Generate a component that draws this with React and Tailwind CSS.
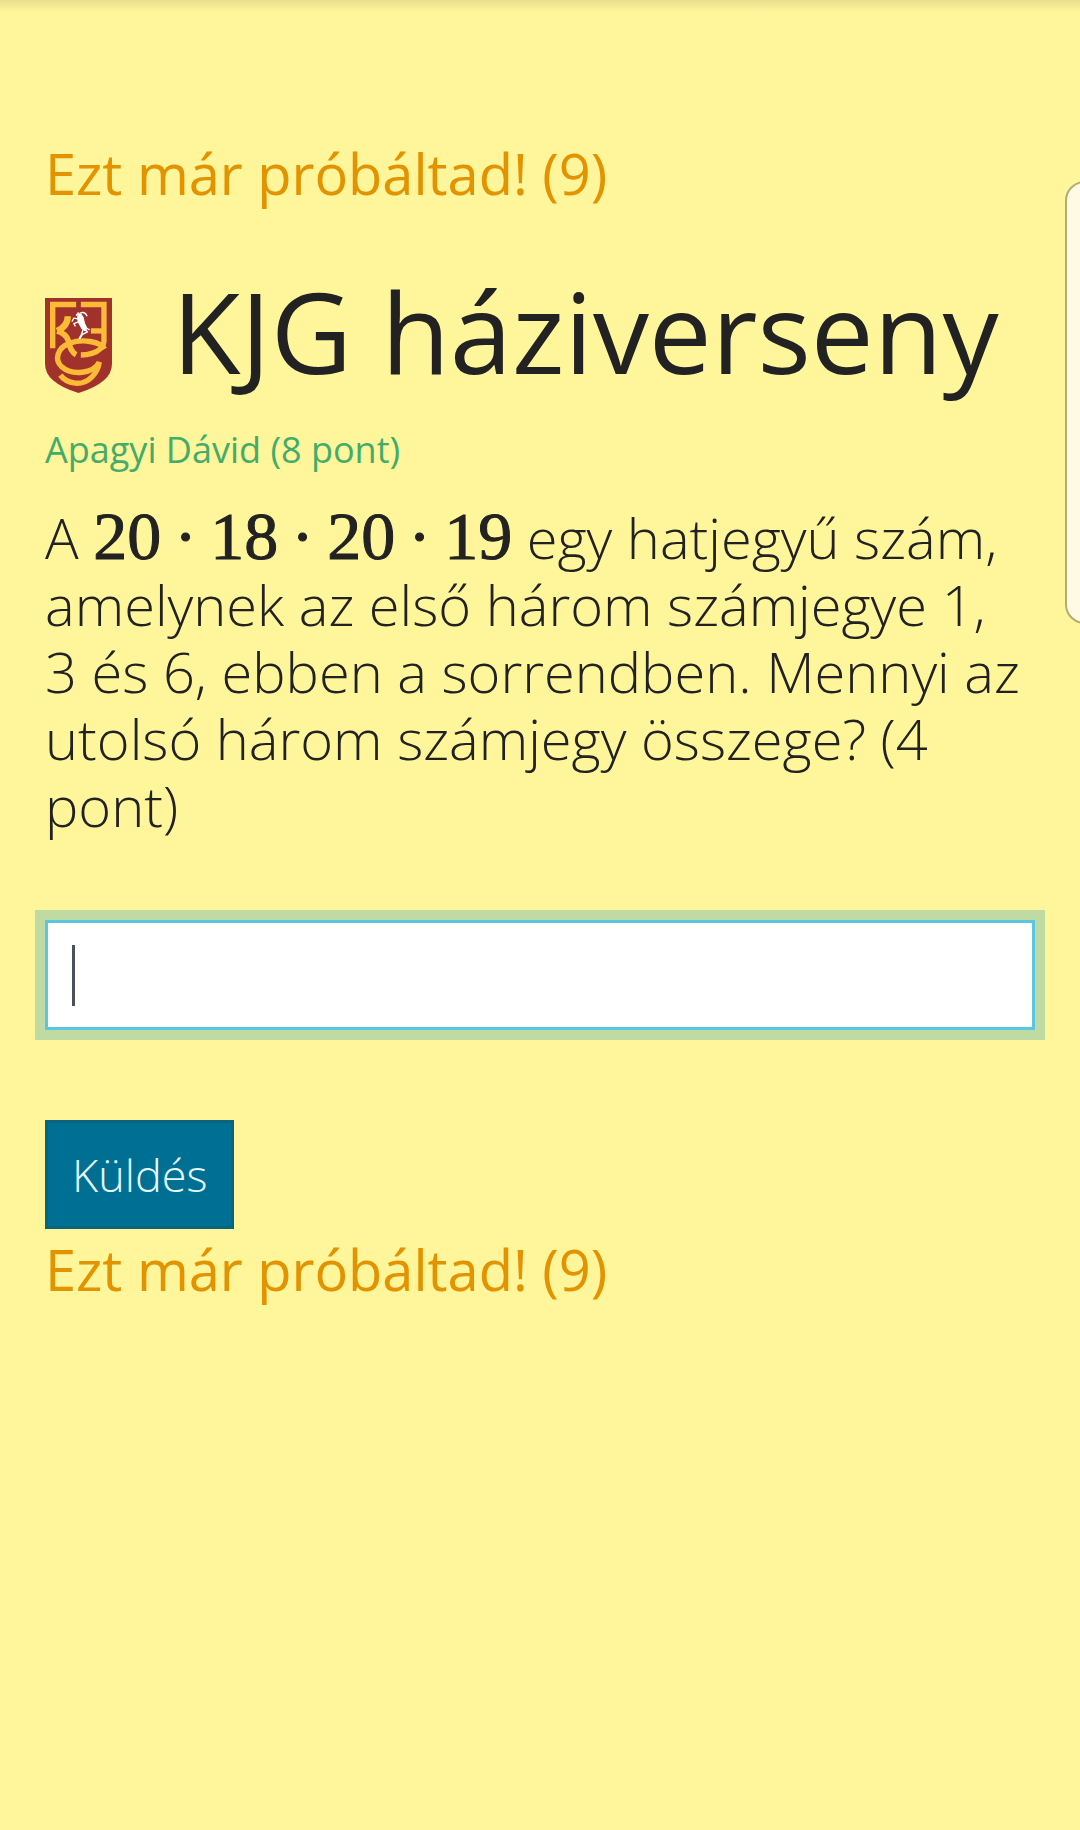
function Crest() {
  return (
    <svg viewBox="0 0 200 283" className="mb-1.5 h-[95px] w-[67px] shrink-0 self-end" role="img" aria-label="KJG">
      <path d="M0 0H200V195Q200 225 176 245Q150 268 100 283Q50 268 24 245Q0 225 0 195Z" fill="#a0322b" />
      <g fill="none" stroke="#fcbb36" strokeWidth="16">
        <path d="M93 19H23V150" />
        <path d="M107 19H176V130Q174 155 140 165Q125 170 107 170" />
        <path d="M137 98H176" />
        <path d="M68 54Q68 84 36 98" strokeWidth="19" />
        <path d="M36 98Q64 106 70 128Q76 160 93 169" strokeWidth="17" />
        <path d="M178 152C165 128 110 122 75 134C35 148 28 185 50 205C80 232 145 226 162 191C158 222 130 258 90 254Q60 250 46 230" />
      </g>
      <g stroke="#fff" strokeLinecap="round" strokeLinejoin="round">
        <path d="M99 46L108 49L114 58L118 76L125 90L120 98L110 91L100 73L97 60Z" fill="#fff" strokeWidth="3" />
        <path d="M105 45Q119 39 125 53M99 44L94 51M99 62L86 60L81 69M101 70L86 76L90 83M120 94L127 101L112 108L104 121M114 94L109 108L102 121M124 90L132 94" fill="none" strokeWidth="4" />
      </g>
    </svg>
  );
}

function Dot() {
  return <span className="inline-block w-[49px] text-center">·</span>;
}

function Notice() {
  return <p className="text-[56px] leading-[80px] text-[#e39300]">Ezt már próbáltad! (9)</p>;
}

export default function App() {
  return (
    <main className="relative min-h-screen overflow-hidden bg-[#fff59b] px-[45px] pt-[133px] font-['Open_Sans',sans-serif] text-[#222]">
      <div className="absolute inset-x-0 top-0 h-3 bg-linear-to-b from-[#e9df8d] to-[#fff59b]" />
      <aside className="absolute top-[181px] -right-6 h-[443px] w-[39px] rounded-[20px] border-2 border-[#b3ad74] bg-[#fffae3]" />

      <Notice />
      <header className="mt-[50px] flex items-center gap-[60px]">
        <Crest />
        <h1 className="text-[112px] leading-[136px] whitespace-nowrap">KJG háziverseny</h1>
      </header>
      <p className="mt-6 text-[36px] leading-[54px] text-[#43ac6a]">Apagyi Dávid (8 pont)</p>

      <form onSubmit={(e) => e.preventDefault()}>
        <label htmlFor="answer" className="mt-[27px] block pr-2 text-[56px] leading-[67px] font-light">
          A{' '}
          <span className="font-['Liberation_Serif',serif] text-[68px] leading-[64px] font-normal whitespace-nowrap [-webkit-text-stroke:1px_#222]">
            20<Dot />18<Dot />20<Dot />19
          </span>{' '}
          egy hatjegyű szám, amelynek az első három számjegye 1, 3 és 6, ebben a sorrendben. Mennyi az utolsó három
          számjegy összege? (4 pont)
        </label>
        <div className="relative mt-[81px]">
          <input
            id="answer"
            type="text"
            className="block h-[110px] w-full border-3 border-[#5bc6df] bg-white px-6 text-[45px] text-[#495057] caret-transparent ring-10 ring-[#c0daa3] outline-none"
          />
          <span className="pointer-events-none absolute top-[25px] left-[27px] h-[61px] w-[3px] bg-[#495057]" />
        </div>
        <button
          type="submit"
          className="mt-[90px] block h-[109px] border-3 border-[#0a647b] bg-[#006f94] px-6 text-[45px] font-light text-[#e7fbff]"
        >
          Küldés
        </button>
      </form>
      <Notice />
    </main>
  );
}
